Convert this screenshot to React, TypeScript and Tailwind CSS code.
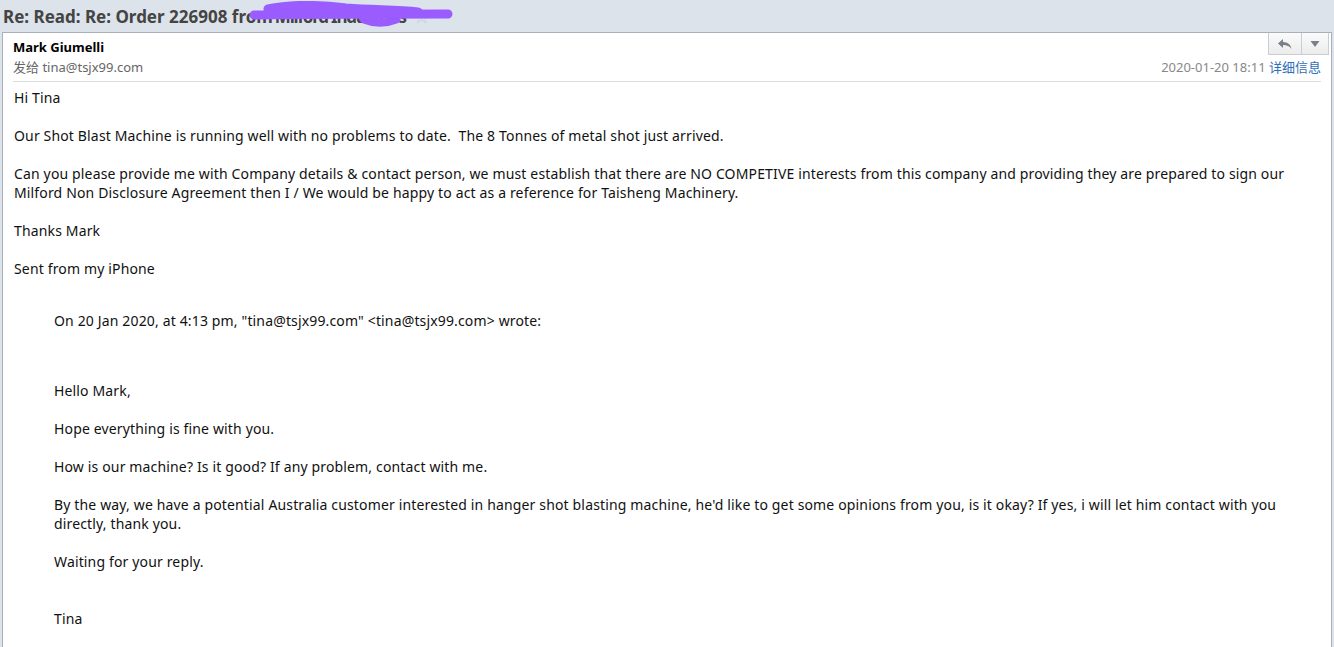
import React from 'react';

const font = { fontFamily: '"Noto Sans", "Noto Sans CJK SC", sans-serif' };

function Scribble() {
  return (
    <svg className="absolute left-[246px] top-[1px]" width="212" height="26" viewBox="0 0 212 26">
      <path
        d="M8 14 C 50 13, 130 13, 202 13 M22 8 C 45 3, 75 4, 100 7 C 130 9, 150 9, 172 11 M118 18 C 128 22, 140 22, 150 18"
        stroke="#9a5cff"
        strokeWidth="9"
        strokeLinecap="round"
        fill="none"
      />
    </svg>
  );
}

function ReplyIcon() {
  return (
    <svg width="16" height="12" viewBox="0 0 16 12">
      <path d="M6 1 L1 5.5 L6 10 L6 7 C 10 7, 12.5 8, 14.5 11 C 14 7, 11 4.2, 6 4 Z" fill="#7b8088" />
    </svg>
  );
}

function Para({ children, className = '' }: { children: React.ReactNode; className?: string }) {
  return <p className={`mb-[19px] ${className}`}>{children}</p>;
}

export default function App() {
  return (
    <div className="w-[1334px] h-[647px] overflow-hidden bg-[#dce3ea] flex flex-col" style={font}>
      <div className="relative h-[32px] shrink-0 px-[3px] flex items-center">
        <h1 className="text-[17px] font-bold text-[#444] whitespace-nowrap leading-none">
          Re: Read: Re: Order 226908 fro<span className="tracking-[-1.2px]">m Milford Industries</span>
        </h1>
        <span className="ml-[8px] text-[#c8ced6] text-[16px] leading-none">☆</span>
        <Scribble />
      </div>

      <div className="flex-1 mx-[2px] bg-white border border-[#a9b0b8] border-b-0 relative">
        <div className="absolute right-[2px] top-0 flex h-[22px] border border-t-0 border-[#c9ced4] bg-gradient-to-b from-[#fbfbfb] to-[#ececec]">
          <button className="w-[33px] flex items-center justify-center border-r border-[#c9ced4]">
            <ReplyIcon />
          </button>
          <button className="w-[26px] flex items-center justify-center">
            <svg width="10" height="8" viewBox="0 0 10 8"><path d="M0.5 1 L9.5 1 L5 7 Z" fill="#7b8088" /></svg>
          </button>
        </div>

        <div className="mx-[10px] border-b border-[#dcdcdc] pt-[4px] pb-[4px]">
          <div className="text-[13px] font-bold text-black leading-[20px]">Mark Giumelli</div>
          <div className="flex justify-between text-[13px] leading-[20px]">
            <span className="text-[#666]">发给 tina@tsjx99.com</span>
            <span className="text-[#888]">
              2020-01-20 18:11 <span className="text-[#2f6fb8]">详细信息</span>
            </span>
          </div>
        </div>

        <div className="px-[11px] pt-[6px] text-[14px] leading-[19px] text-[#111] tracking-[0.15px]">
          <Para>Hi Tina</Para>
          <Para>Our Shot Blast Machine is running well with no problems to date.&nbsp; The 8 Tonnes of metal shot just arrived.</Para>
          <Para>
            Can you please provide me with Company details &amp; contact person, we must establish that there are NO COMPETIVE interests from this company and providing they are prepared to sign our Milford Non Disclosure Agreement then I / We would be happy to act as a reference for Taisheng Machinery.
          </Para>
          <Para>Thanks Mark</Para>
          <Para className="mb-[33px]">Sent from my iPhone</Para>

          <div className="pl-[40px]">
            <Para className="mb-[51px]">On 20 Jan 2020, at 4:13 pm, "tina@tsjx99.com" &lt;tina@tsjx99.com&gt; wrote:</Para>
            <Para>Hello Mark,</Para>
            <Para>Hope everything is fine with you.</Para>
            <Para>How is our machine? Is it good? If any problem, contact with me.</Para>
            <Para>
              By the way, we have a potential Australia customer interested in hanger shot blasting machine, he'd like to get some opinions from you, is it okay? If yes, i will let him contact with you directly, thank you.
            </Para>
            <Para className="mb-[38px]">Waiting for your reply.</Para>
            <Para>Tina</Para>
          </div>
        </div>
      </div>
    </div>
  );
}
